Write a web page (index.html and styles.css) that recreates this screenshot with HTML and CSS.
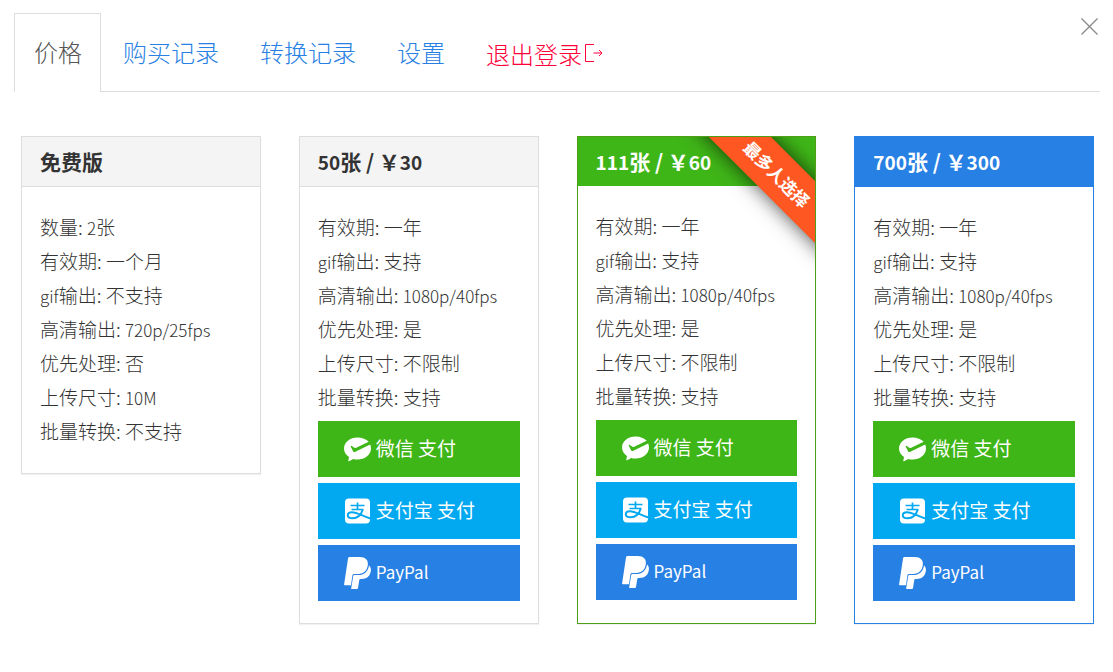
FILE: index.html
```html
<!DOCTYPE html>
<html lang="zh-CN">
  <head>
    <meta charset="UTF-8" />
    <meta name="viewport" content="width=device-width, initial-scale=1.0" />
    <title>价格</title>
    <link rel="stylesheet" href="styles.css">
  </head>

  <body>
    <!-- icons shared by the pay buttons -->
    <svg class="sprite" width="0" height="0" aria-hidden="true">
      <symbol id="wechat" viewBox="0 0 27 32">
        <path fill="#fff" d="M13.500 4.500C6.100 4.500 0 9.400 0 15.500c0 3.500 1.900 6.500 5 8.500l-.7 3.700c-.1.500.3.700.7.500l4.300-2.200c1.300.4 2.700.5 4.200.5C21 26.500 27 21.600 27 15.500c0-1.400-.3-2.700-.8-3.900L10.800 18.900c-.7.400-1.300.1-1.600-.5L6.700 13.400c-.2-.5.200-.9.700-.6l3 2c.4.300.8.300 1.300.1L24.700 8.800C22.200 6.200 18.200 4.500 13.500 4.500z"/>
      </symbol>
      <symbol id="alipay" viewBox="0 0 27 32">
        <rect x="1" y="3.500" width="25" height="25" rx="4" fill="#fff"/>
        <g fill="none" stroke="#02a9f1" stroke-width="1.700">
          <path d="M6.500 10.500h14M13.500 7.500v7M7.500 14.500h11.800"/>
          <path d="M18.800 14.500c-1.600 5.200-5.200 8.800-10.300 8.800-3 0-4.700-1.200-4.700-3 0-1.900 1.800-3.100 4.200-3.100 4.700 0 9 3 18.500 6.300" stroke-width="2"/>
        </g>
      </symbol>
      <symbol id="paypal" viewBox="0 0 27 32">
        <path fill="#fff" d="M5.700 0H16c5.200 0 8.600 3 7.800 8.200-.8 6-5 8.900-10.800 8.900h-2.800c-1 0-1.600.5-1.800 1.500L7 28.300H.8c-.5 0-.8-.3-.7-.8L4 1.500C4.200.5 4.700 0 5.700 0z"/>
        <path fill="#fff" d="M25 8.500c1.700 1.300 2.200 3.500 1.800 5.700-.9 5.200-4.300 7.700-9.200 7.700h-1c-.8 0-1.200.4-1.300 1.100l-1.300 7.900c-.1.700-.5 1.100-1.200 1.100H7.900c-.6 0-.8-.3-.7-.8l2-11.900c.1-.8.600-1.200 1.400-1.200H14c6 0 10-3.200 11-9.600z"/>
      </symbol>
    </svg>

    <div class="panel">
      <button class="close" aria-label="关闭">
        <svg width="17" height="17" viewBox="0 0 17 17"><path d="M.5.500l16 16M16.500.500l-16 16" stroke="#888" stroke-width="1.300"/></svg>
      </button>

      <nav class="tabs">
        <a class="tab active" href="#price">价格</a>
        <a class="tab" href="#orders">购买记录</a>
        <a class="tab" href="#history">转换记录</a>
        <a class="tab" href="#settings">设置</a>
        <a class="tab logout" href="#logout">退出登录<svg width="20" height="20" viewBox="0 0 20 20"><path d="M11 1.500H2.500v17H11" /><path d="M10.500 10h8.500M16 7l3 3-3 3" /></svg></a>
      </nav>

      <div class="plans">
        <section class="plan free">
          <h3>免费版</h3>
          <div class="plan-body">
            <ul>
              <li>数量: <span class="en">2</span>张</li>
              <li>有效期: 一个月</li>
              <li><span class="en">gif</span>输出: 不支持</li>
              <li>高清输出: <span class="en">720p/25fps</span></li>
              <li>优先处理: 否</li>
              <li>上传尺寸: <span class="en">10M</span></li>
              <li>批量转换: 不支持</li>
            </ul>
          </div>
        </section>

        <section class="plan">
          <h3><span class="en">50</span>张 / ￥<span class="en">30</span></h3>
          <div class="plan-body">
            <ul>
              <li>有效期: 一年</li>
              <li><span class="en">gif</span>输出: 支持</li>
              <li>高清输出: <span class="en">1080p/40fps</span></li>
              <li>优先处理: 是</li>
              <li>上传尺寸: 不限制</li>
              <li>批量转换: 支持</li>
            </ul>
            <div class="pay">
              <button class="btn wechat"><svg><use href="#wechat"/></svg><span>微信 支付</span></button>
              <button class="btn alipay"><svg><use href="#alipay"/></svg><span>支付宝 支付</span></button>
              <button class="btn paypal"><svg><use href="#paypal"/></svg><span class="en">PayPal</span></button>
            </div>
          </div>
        </section>

        <section class="plan green">
          <div class="ribbon">最多人选择</div>
          <h3><span class="en">111</span>张 / ￥<span class="en">60</span></h3>
          <div class="plan-body">
            <ul>
              <li>有效期: 一年</li>
              <li><span class="en">gif</span>输出: 支持</li>
              <li>高清输出: <span class="en">1080p/40fps</span></li>
              <li>优先处理: 是</li>
              <li>上传尺寸: 不限制</li>
              <li>批量转换: 支持</li>
            </ul>
            <div class="pay">
              <button class="btn wechat"><svg><use href="#wechat"/></svg><span>微信 支付</span></button>
              <button class="btn alipay"><svg><use href="#alipay"/></svg><span>支付宝 支付</span></button>
              <button class="btn paypal"><svg><use href="#paypal"/></svg><span class="en">PayPal</span></button>
            </div>
          </div>
        </section>

        <section class="plan blue">
          <h3><span class="en">700</span>张 / ￥<span class="en">300</span></h3>
          <div class="plan-body">
            <ul>
              <li>有效期: 一年</li>
              <li><span class="en">gif</span>输出: 支持</li>
              <li>高清输出: <span class="en">1080p/40fps</span></li>
              <li>优先处理: 是</li>
              <li>上传尺寸: 不限制</li>
              <li>批量转换: 支持</li>
            </ul>
            <div class="pay">
              <button class="btn wechat"><svg><use href="#wechat"/></svg><span>微信 支付</span></button>
              <button class="btn alipay"><svg><use href="#alipay"/></svg><span>支付宝 支付</span></button>
              <button class="btn paypal"><svg><use href="#paypal"/></svg><span class="en">PayPal</span></button>
            </div>
          </div>
        </section>
      </div>
    </div>
  </body>
</html>
```
FILE: styles.css
```css
* {
  box-sizing: border-box;
}

body {
  margin: 0;
  background: #fff;
  color: #333;
  font-family: "Noto Sans CJK SC", "Noto Sans", sans-serif;
  font-weight: 300;
  font-size: 19px;
}

.sprite {
  position: absolute;
}

/* latin letters and digits run wide next to the hanzi */
.en {
  font-size: 17px;
}

.panel {
  position: relative;
  padding: 13px 13px 48px 14px;
}

.close {
  position: absolute;
  top: 13px;
  right: 10px;
  padding: 5px;
  border: 0;
  background: none;
  cursor: pointer;
}

.close svg {
  display: block;
}

/* tabs */
.tabs {
  display: flex;
  gap: 2px;
  border-bottom: 1px solid #ddd;
}

.tab {
  padding: 0 18px 3px 19px;
  margin-bottom: -1px;
  border: 1px solid transparent;
  border-bottom: 0;
  font-size: 24px;
  line-height: 75px;
  color: #2780e3;
  text-decoration: none;
}

.tab.active {
  border-color: #ddd;
  background: #fff;
  color: #555;
}

.tab.logout {
  display: flex;
  align-items: center;
  padding-bottom: 0;
  color: #ff0039;
}

.logout svg {
  margin-left: 1px;
  fill: none;
  stroke: #ff0039;
}

/* plans */
.plans {
  display: grid;
  grid-template-columns: repeat(4, 1fr);
  gap: 38px;
  padding: 44px 6px 0 7px;
}

.plan {
  position: relative;
  overflow: hidden;
  border: 1px solid #ddd;
  box-shadow: 0 1px 1px rgba(0, 0, 0, 0.05);
}

.plan.free {
  align-self: start;
}

.plan h3 {
  margin: 0;
  padding: 0 18px;
  border-bottom: 1px solid #ddd;
  background: #f4f4f4;
  font-size: 21px;
  font-weight: 700;
  line-height: 49px;
}

.plan h3 .en {
  font-size: 19px;
}

.plan-body {
  padding: 23px 18px 22px;
}

.free .plan-body {
  padding-bottom: 25px;
}

.plan ul {
  margin: 0;
  padding: 0;
  list-style: none;
}

.plan li {
  height: 34px;
  line-height: 34px;
}

.plan.green {
  border-color: #4e9f15;
}

.green h3 {
  border-bottom: 0;
  background: #3fb618;
  color: #fff;
}

.plan.blue {
  border-color: #2780e3;
}

.blue h3 {
  border-color: #2780e3;
  background: #2780e3;
  color: #fff;
}

.ribbon {
  position: absolute;
  top: 15px;
  right: -62px;
  width: 200px;
  background: #ff5722;
  color: #fff;
  font-size: 17px;
  font-weight: 700;
  line-height: 44px;
  text-align: center;
  transform: rotate(45deg);
  box-shadow: 0 0 20px rgba(0, 0, 0, 0.7);
}

/* pay buttons */
.pay {
  display: flex;
  flex-direction: column;
  gap: 6px;
  padding-top: 7px;
}

.btn {
  display: flex;
  align-items: center;
  gap: 5px;
  height: 56px;
  padding: 0 26px;
  border: 0;
  color: #fff;
  font: inherit;
  font-weight: 400;
  cursor: pointer;
}

.btn svg {
  width: 27px;
  height: 32px;
}

.btn span {
  padding-bottom: 4px;
}

.btn.wechat {
  background: #3fb618;
}

.btn.alipay {
  background: #02a9f1;
}

.btn.paypal {
  background: #2780e3;
}
```
